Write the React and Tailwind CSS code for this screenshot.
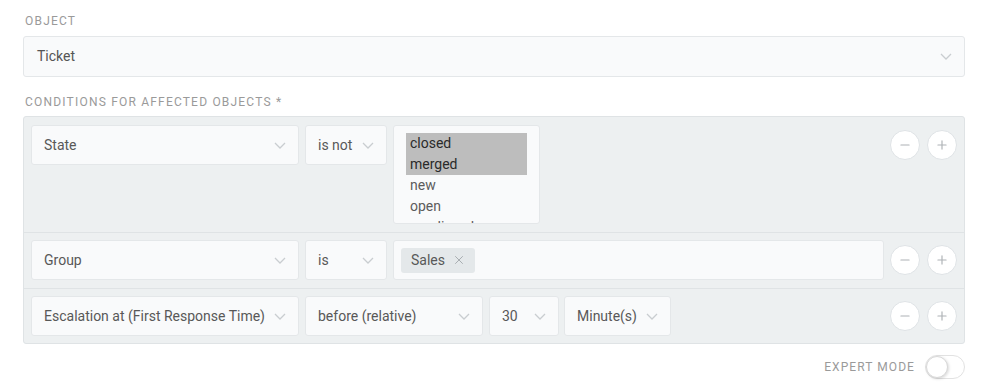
import { Minus, Plus, X } from "lucide-react";

const font = { fontFamily: "Roboto, 'Noto Sans', sans-serif" };

function Chevron() {
  return (
    <svg width="12" height="7" viewBox="0 0 12 7" className="shrink-0">
      <path d="M1 1l5 5 5-5" fill="none" stroke="#c9cdd0" strokeWidth="1.3" />
    </svg>
  );
}

function Select({ value, className }) {
  return (
    <div
      className={`h-10 flex items-center justify-between pl-3 pr-3 bg-[#f9fafb] border border-[#e4e7e9] rounded-[3px] text-[14px] text-[#585858] ${className}`}
    >
      <span className="whitespace-nowrap">{value}</span>
      <Chevron />
    </div>
  );
}

function RowButtons() {
  return (
    <div className="ml-auto flex gap-[7px] shrink-0">
      <button className="w-[30px] h-[30px] rounded-full bg-white border border-[#dfe3e6] flex items-center justify-center">
        <Minus size={14} color="#aeb2b5" strokeWidth={2} />
      </button>
      <button className="w-[30px] h-[30px] rounded-full bg-white border border-[#dfe3e6] flex items-center justify-center">
        <Plus size={14} color="#aeb2b5" strokeWidth={2} />
      </button>
    </div>
  );
}

export default function App() {
  const states = [
    { name: "closed", on: true },
    { name: "merged", on: true },
    { name: "new", on: false },
    { name: "open", on: false },
    { name: "pending close", on: false },
  ];

  return (
    <div className="w-[988px] h-[392px] bg-white px-[23px] pt-[13px]" style={font}>
      <div className="text-[12px] tracking-[0.1em] text-[#9a9a9a] pl-[2px] h-[16px] leading-[16px]">OBJECT</div>
      <div className="mt-[7px] h-[41px] flex items-center justify-between pl-[13px] pr-[12px] bg-[#f9fafb] border border-[#e4e7e9] rounded-[3px] text-[14px] text-[#555]">
        <span>Ticket</span>
        <Chevron />
      </div>

      <div className="mt-[17px] text-[12px] tracking-[0.1em] text-[#9a9a9a] pl-[2px] h-[16px] leading-[16px]">
        CONDITIONS FOR AFFECTED OBJECTS *
      </div>

      <div className="mt-[6px] bg-[#edf0f1] border border-[#dfe3e5] rounded-[3px]">
        <div className="flex items-start pl-[7px] pr-[7px] pt-[8px] pb-[8px] border-b border-[#dfe3e5]">
          <div className="flex gap-[6px]">
            <Select value="State" className="w-[268px]" />
            <Select value="is not" className="w-[82px]" />
            <div className="w-[147px] h-[99px] bg-[#f9fafb] border border-[#e4e7e9] rounded-[3px] overflow-hidden pt-[7px] px-[12px]">
              {states.map((s) => (
                <div
                  key={s.name}
                  className={`h-[21px] leading-[21px] pl-[4px] text-[14px] ${s.on ? "bg-[#bdbdbd] text-[#2a2a2a]" : "text-[#5c5c5c]"}`}
                >
                  {s.name}
                </div>
              ))}
            </div>
          </div>
          <div className="ml-auto pt-[5px]">
            <RowButtons />
          </div>
        </div>

        <div className="flex items-center pl-[7px] pr-[7px] pt-[7px] pb-[8px] border-b border-[#dfe3e5]">
          <div className="flex gap-[6px] flex-1">
            <Select value="Group" className="w-[268px]" />
            <Select value="is" className="w-[82px]" />
            <div className="flex-1 h-10 bg-[#f9fafb] border border-[#e4e7e9] rounded-[3px] flex items-center px-[7px]">
              <div className="h-[25px] flex items-center gap-[7px] bg-[#e4e8ea] rounded-[3px] pl-[10px] pr-[9px] text-[14px] text-[#585858]">
                <span>Sales</span>
                <X size={14} color="#9aa0a4" strokeWidth={1.4} />
              </div>
            </div>
          </div>
          <div className="ml-[6px]">
            <RowButtons />
          </div>
        </div>

        <div className="flex items-center pl-[7px] pr-[7px] pt-[7px] pb-[7px]">
          <div className="flex gap-[6px]">
            <Select value="Escalation at (First Response Time)" className="w-[268px]" />
            <Select value="before (relative)" className="w-[178px]" />
            <Select value="30" className="w-[70px]" />
            <Select value="Minute(s)" className="w-[107px] -ml-[1px]" />
          </div>
          <RowButtons />
        </div>
      </div>

      <div className="mt-[11px] flex items-center justify-end gap-[10px]">
        <span className="text-[12px] tracking-[0.09em] text-[#9a9a9a]">EXPERT MODE</span>
        <div className="w-[40px] h-[24px] rounded-full border border-[#e2e2e2] bg-white relative">
          <div className="absolute left-0 top-0 w-[22px] h-[22px] rounded-full bg-white border border-[#d8d8d8] shadow-[1px_1px_3px_rgba(0,0,0,0.15)]" />
        </div>
      </div>
    </div>
  );
}
